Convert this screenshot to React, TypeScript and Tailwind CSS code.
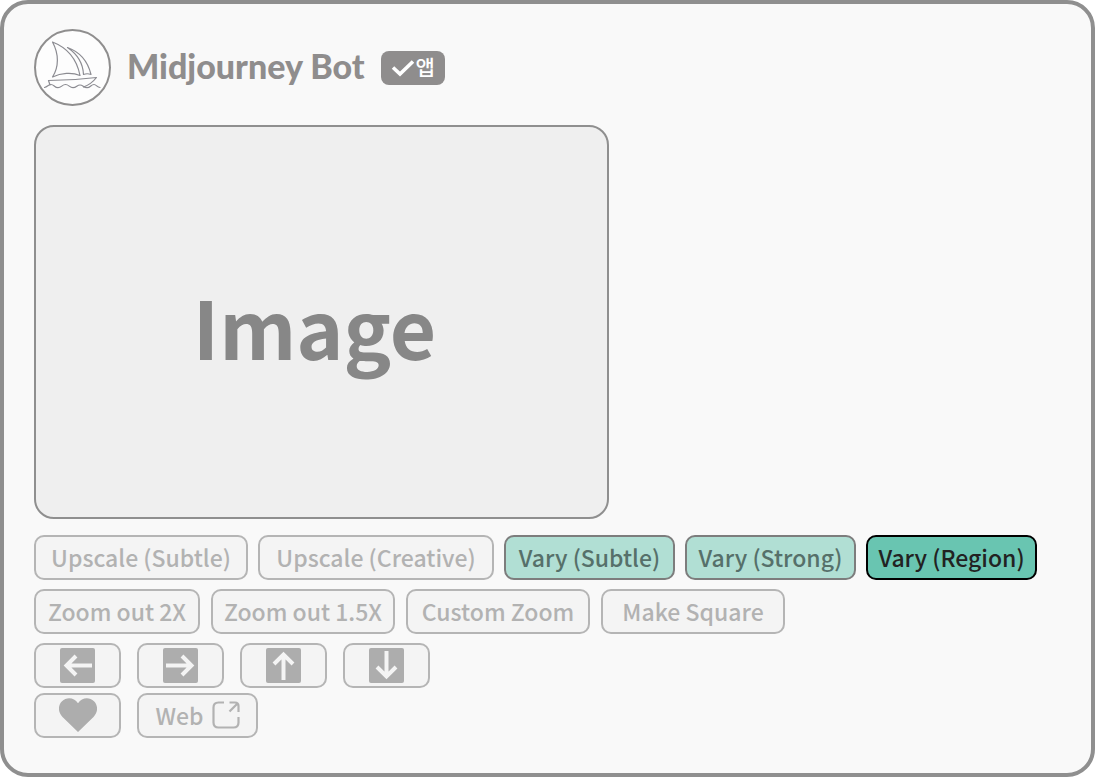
import React from 'react';

type Tone = 'muted' | 'soft' | 'active';

const toneClasses: Record<Tone, string> = {
    muted: 'border-[#b5b5b5] bg-[#f4f4f4] text-[#b2b2b2]',
    soft: 'border-[#7d7d7d] bg-[#b1dfd4] text-[#56706a]',
    active: 'border-black bg-[#69c5b1] text-[#222222]',
};

const upscaleActions: { label: string; tone: Tone; width: string }[] = [
    { label: 'Upscale (Subtle)', tone: 'muted', width: 'w-[214px]' },
    { label: 'Upscale (Creative)', tone: 'muted', width: 'w-[236px]' },
    { label: 'Vary (Subtle)', tone: 'soft', width: 'w-[171px]' },
    { label: 'Vary (Strong)', tone: 'soft', width: 'w-[171px]' },
    { label: 'Vary (Region)', tone: 'active', width: 'w-[171px]' },
];

const zoomActions = [
    { label: 'Zoom out 2X', width: 'w-[166px]' },
    { label: 'Zoom out 1.5X', width: 'w-[184px]' },
    { label: 'Custom Zoom', width: 'w-[184px]' },
    { label: 'Make Square', width: 'w-[184px]' },
];

const panActions = [
    { label: 'Pan left', path: 'M32 17.5H7M16 8L6.500 17.5L16 27' },
    { label: 'Pan right', path: 'M3 17.5H28M19 8L28.500 17.5L19 27' },
    { label: 'Pan up', path: 'M17.5 32V7M8 16L17.5 6.5L27 16' },
    { label: 'Pan down', path: 'M17.5 3V28M8 19L17.5 28.5L27 19' },
];

const ActionButton: React.FC<{ tone?: Tone; width: string; label?: string; children: React.ReactNode }> = ({ tone = 'muted', width, label, children }) => (
    <button
        type="button"
        aria-label={label}
        className={`flex h-[45px] items-center justify-center rounded-[10px] border-2 pb-px text-[23px] leading-8 font-medium whitespace-nowrap ${width} ${toneClasses[tone]}`}
    >
        {children}
    </button>
);

const BoatLogo = () => (
    <svg className="size-[77px] shrink-0" viewBox="0 0 77 77" fill="none" aria-hidden="true">
        <circle cx="38.5" cy="38.5" r="37.5" fill="#fdfdfd" stroke="#8f8e8e" strokeWidth="2" />
        <g stroke="#8b8b91" strokeWidth="1.2" strokeLinejoin="round" strokeLinecap="round">
            <path d="M18.5 13C34 19 43 31 46 46.5C38 43 27 44 18.5 48C25 38 25 25 18.5 13Z" />
            <path d="M33.5 18.5C46 23 54 33 57 45.5C54.500 44.500 52 44.500 49.500 45.500C49 34 43 25 33.500 18.500Z" />
            <path d="M14.500 51.500C31 51.500 47 50.500 62.500 48.500C59 53 55 56 49.500 58M14.500 51.500L16 56" />
            <path d="M10.500 58.500C13.500 58 14.500 55.500 17 55.500C20 55.500 20.500 58.700 24 58.700C27.500 58.700 28 55.500 31.500 55.500C35 55.500 35.500 58.700 39 58.700C42.500 58.700 43 56 46 56C49 56 49.500 58.700 53 58.700C56.500 58.700 57 55.500 60 55.500C62.500 55.500 63 58.500 66 58.500" />
        </g>
    </svg>
);

const App: React.FC = () => {
    return (
        <main className="min-h-screen rounded-[28px] border-4 border-[#8f8f8f] bg-[#f9f9f9] px-[30px] pt-[25px] pb-[35px] font-['Noto_Sans_CJK_KR',sans-serif]">
            <header className="flex items-center">
                <BoatLogo />
                <h1 className="ml-4 pb-1 font-[Lato,sans-serif] text-[34px] leading-10 font-black text-[#8f8d8d]">Midjourney Bot</h1>
                <span className="ml-4 flex h-[34px] w-16 items-center justify-center gap-px rounded-lg bg-[#8f8d8d] pb-1 text-[21px] leading-8 font-medium text-white">
                    <svg className="mt-1 h-[18px] w-6 shrink-0" viewBox="0 0 24 18" fill="none" aria-hidden="true">
                        <path d="M2 8.500L9 15L22 2.500" stroke="currentColor" strokeWidth="3.600" />
                    </svg>
                    앱
                </span>
            </header>

            <div className="mt-[19px] flex h-[394px] w-full max-w-[575px] items-center justify-center rounded-[20px] border-2 border-[#8f8f8f] bg-[#efefef] pt-1.5 pr-3.5">
                <span className="text-[80px] leading-none font-bold text-[#878787]">Image</span>
            </div>

            <div className="mt-4 flex flex-wrap gap-[10px]">
                {upscaleActions.map(({ label, tone, width }) => (
                    <ActionButton key={label} tone={tone} width={width}>{label}</ActionButton>
                ))}
            </div>

            <div className="mt-[9px] flex flex-wrap gap-[11px]">
                {zoomActions.map(({ label, width }) => (
                    <ActionButton key={label} width={width}>{label}</ActionButton>
                ))}
            </div>

            <div className="mt-[9px] flex flex-wrap gap-4">
                {panActions.map(({ label, path }) => (
                    <ActionButton key={label} label={label} width="w-[87px]">
                        <svg className="size-[35px]" viewBox="0 0 35 35" fill="none" aria-hidden="true">
                            <rect width="35" height="35" rx="2" fill="#adadad" />
                            <path d={path} stroke="#f4f4f4" strokeWidth="4" />
                        </svg>
                    </ActionButton>
                ))}
            </div>

            <div className="mt-[5px] flex flex-wrap gap-4">
                <ActionButton label="Favorite" width="w-[87px]">
                    <svg className="h-[34px] w-[38px]" viewBox="0 0 38 34" aria-hidden="true">
                        <path d="M19 34L3.500 19C-1.200 14-1.200 7.500 3 3.200C7.500-1.200 15-.9 19 5.200C23-.9 30.500-1.200 35 3.200C39.200 7.500 39.200 14 34.500 19Z" fill="#adadad" />
                    </svg>
                </ActionButton>
                <ActionButton width="w-[121px]">
                    Web
                    <svg className="ml-2 size-7" viewBox="0 0 28 28" fill="none" aria-hidden="true">
                        <path d="M12 1.500H6.500Q1.500 1.500 1.500 6.500V21.500Q1.500 26.500 6.500 26.500H21.500Q26.500 26.500 26.500 21.500V16M17.500 1.500H23Q26.500 1.500 26.500 5V11M25.500 2.500L17.500 10.500" stroke="currentColor" strokeWidth="2.200" />
                    </svg>
                </ActionButton>
            </div>
        </main>
    );
};

export default App;
